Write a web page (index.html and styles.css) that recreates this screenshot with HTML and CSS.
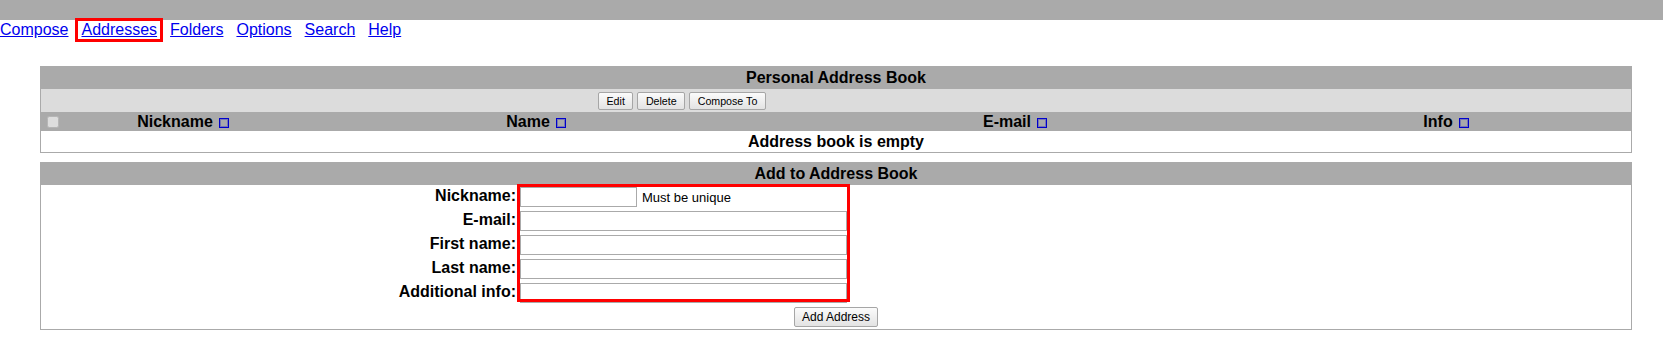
FILE: index.html
```html
<!DOCTYPE html>
<html lang="en">
<head>
    <meta charset="UTF-8">
    <title>Addresses</title>
    <link rel="stylesheet" href="styles.css">
</head>
<body>
    <!-- top bar -->
    <div class="topbar"></div>

    <!-- menu links -->
    <div class="nav">
        <a href="#">Compose</a>
        <a href="#" class="current">Addresses</a>
        <a href="#">Folders</a>
        <a href="#">Options</a>
        <a href="#">Search</a>
        <a href="#">Help</a>
    </div>

    <!-- personal address book -->
    <div class="book">
        <div class="book-title">Personal Address Book</div>
        <div class="book-actions">
            <button class="btn">Edit</button>
            <button class="btn">Delete</button>
            <button class="btn">Compose To</button>
        </div>
        <div class="book-cols">
            <span class="col-cb"><input type="checkbox" disabled></span>
            <span>Nickname<i class="sort"></i></span>
            <span>Name<i class="sort"></i></span>
            <span>E-mail<i class="sort"></i></span>
            <span>Info<i class="sort"></i></span>
        </div>
        <div class="book-empty">Address book is empty</div>
    </div>

    <!-- add form -->
    <div class="book add">
        <div class="book-title">Add to Address Book</div>
        <div class="add-form">
            <div class="labels">
                <label>Nickname:</label>
                <label>E-mail:</label>
                <label>First name:</label>
                <label>Last name:</label>
                <label>Additional info:</label>
            </div>
            <div class="fields">
                <div class="field"><input type="text" class="short"><span class="hint">Must be unique</span></div>
                <div class="field"><input type="text"></div>
                <div class="field"><input type="text"></div>
                <div class="field"><input type="text"></div>
                <div class="field"><input type="text"></div>
            </div>
        </div>
        <div class="add-submit">
            <button class="btn big">Add Address</button>
        </div>
    </div>
</body>
</html>
```

FILE: styles.css
```css
*,
*::before,
*::after{
    margin: 0;
    padding: 0;
    box-sizing: border-box;
}

body{
    font-family: "Liberation Sans", Arial, sans-serif;
    font-size: 16px;
    color: #000;
    background-color: #fff;
}

/* top bar */
.topbar{
    height: 20px;
    background-color: #aaa;
}

/* menu */
.nav{
    display: flex;
    gap: 13px;
    height: 18px;
    line-height: 20px;
}
.nav a{
    color: #00e;
}
/* highlight box on current link */
.nav .current{
    position: relative;
}
.nav .current::after{
    content: "";
    position: absolute;
    left: -6px;
    right: -6px;
    top: -2px;
    bottom: -4px;
    border: 3px solid #f00;
}

/* tables */
.book{
    width: 1592px;
    margin: 28px 0 0 40px;
    border: 1px solid #aaa;
}
.book.add{
    margin-top: 9px;
}
.book-title{
    height: 22px;
    line-height: 22px;
    background-color: #aaa;
    text-align: center;
    font-weight: bold;
}
.book-actions{
    height: 23px;
    display: flex;
    align-items: center;
    gap: 4px;
    padding-left: 557px;
    background-color: #dcdcdc;
}
.btn{
    font-family: inherit;
    font-size: 10.67px;
    height: 18px;
    padding: 0 7.5px;
    color: #000;
    border: 1px solid #a6a6a6;
    border-radius: 2px;
    background: linear-gradient(#fbfbfb, #e3e3e3);
}
.btn.big{
    font-size: 12px;
    height: 20px;
    padding: 0 7px;
}

/* column headers */
.book-cols{
    height: 19px;
    line-height: 19px;
    display: grid;
    grid-template-columns: 22px 240px 466px 492px 1fr;
    background-color: #aaa;
    font-weight: bold;
    text-align: center;
}
.col-cb{
    display: flex;
    align-items: center;
    justify-content: center;
}
.col-cb input{
    width: 12px;
    height: 12px;
    margin: 0 0 0 1px;
}
.sort{
    display: inline-block;
    width: 10px;
    height: 10px;
    margin-left: 6px;
    vertical-align: -1px;
    border: 1px solid #00c;
    box-shadow: inset 0 0 0 1px rgba(0, 0, 204, 0.3);
}
.book-empty{
    height: 21px;
    line-height: 21px;
    text-align: center;
    font-weight: bold;
}

/* add form */
.add-form{
    display: grid;
    grid-template-columns: 476px 1fr;
}
.labels label{
    display: block;
    height: 24px;
    line-height: 22px;
    padding-right: 1px;
    text-align: right;
    font-weight: bold;
}
.fields{
    position: relative;
    padding-left: 3px;
}
/* highlight box round the inputs */
.fields::after{
    content: "";
    position: absolute;
    top: -1px;
    left: 0;
    width: 333px;
    height: 118px;
    border: 3px solid #f00;
}
.field{
    height: 24px;
    display: flex;
    align-items: center;
}
.field input{
    width: 327px;
    height: 20px;
    border: 1px solid #aaa;
    background-color: #fff;
}
.field input.short{
    width: 117px;
}
.hint{
    margin-left: 5px;
    font-size: 13px;
}
.add-submit{
    height: 24px;
    display: flex;
    align-items: center;
    justify-content: center;
}
```
